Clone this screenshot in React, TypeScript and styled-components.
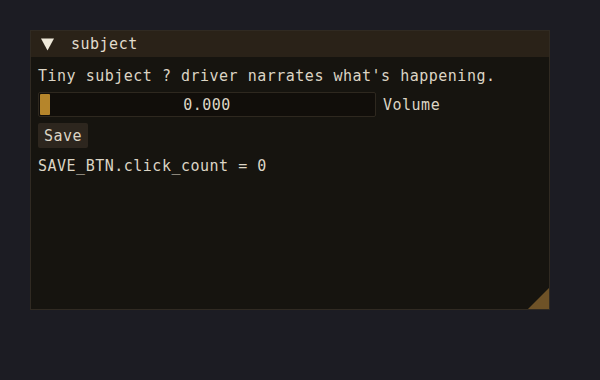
import React from "react";
import styled, { createGlobalStyle } from "styled-components";

const Global = createGlobalStyle`
  html, body { margin: 0; padding: 0; background: #1c1c23; }
  #root { width: 600px; height: 380px; }
`;

const Page = styled.div`
  width: 600px;
  height: 380px;
  box-sizing: border-box;
  padding: 30px;
  background: #1c1c23;
  font-family: "DejaVu Sans Mono", "Liberation Mono", monospace;
  font-size: 15px;
  letter-spacing: 0.5px;
  color: #dcd5c5;
`;

const Window = styled.div`
  position: relative;
  width: 520px;
  height: 280px;
  box-sizing: border-box;
  border: 1px solid #302a22;
  background: #16140f;
  display: flex;
  flex-direction: column;
`;

const TitleBar = styled.div`
  height: 26px;
  background: #2a2218;
  display: flex;
  align-items: center;
  padding-left: 10px;
  gap: 17px;
  color: #e2dccd;
`;

const Arrow = styled.svg`
  width: 13px;
  height: 13px;
  display: block;
`;

const Content = styled.div`
  display: flex;
  flex-direction: column;
  align-items: flex-start;
  gap: 6px;
  padding: 7px 7px 0;
`;

const TextLine = styled.div`
  height: 22px;
  line-height: 25px;
  white-space: pre;
`;

const SliderRow = styled.div`
  display: flex;
  align-items: center;
  gap: 7px;
`;

const Frame = styled.div`
  position: relative;
  width: 338px;
  height: 25px;
  box-sizing: border-box;
  border: 1px solid #2e281f;
  border-radius: 2px;
  background: #110e0a;
  display: flex;
  align-items: center;
  justify-content: center;
`;

const Grab = styled.div`
  position: absolute;
  left: 1px;
  top: 1px;
  width: 10px;
  height: 21px;
  border-radius: 1px;
  background: #b5852b;
`;

const Button = styled.div`
  height: 25px;
  box-sizing: border-box;
  padding: 0 6px;
  display: flex;
  align-items: center;
  background: #2d261e;
  border-radius: 2px;
`;

const Grip = styled.svg`
  position: absolute;
  right: 0;
  bottom: 0;
  width: 21px;
  height: 21px;
  display: block;
`;

export default function App() {
  return (
    <>
      <Global />
      <Page>
        <Window>
          <TitleBar>
            <Arrow viewBox="0 0 13 13">
              <polygon points="0,0.5 13,0.5 6.5,12.5" fill="#efe9da" />
            </Arrow>
            <span>subject</span>
          </TitleBar>
          <Content>
            <TextLine>Tiny subject ? driver narrates what's happening.</TextLine>
            <SliderRow>
              <Frame>
                <Grab />
                <span>0.000</span>
              </Frame>
              <span>Volume</span>
            </SliderRow>
            <Button>Save</Button>
            <TextLine>SAVE_BTN.click_count = 0</TextLine>
          </Content>
          <Grip viewBox="0 0 21 21">
            <polygon points="21,0 21,21 0,21" fill="#6e5227" />
          </Grip>
        </Window>
      </Page>
    </>
  );
}
